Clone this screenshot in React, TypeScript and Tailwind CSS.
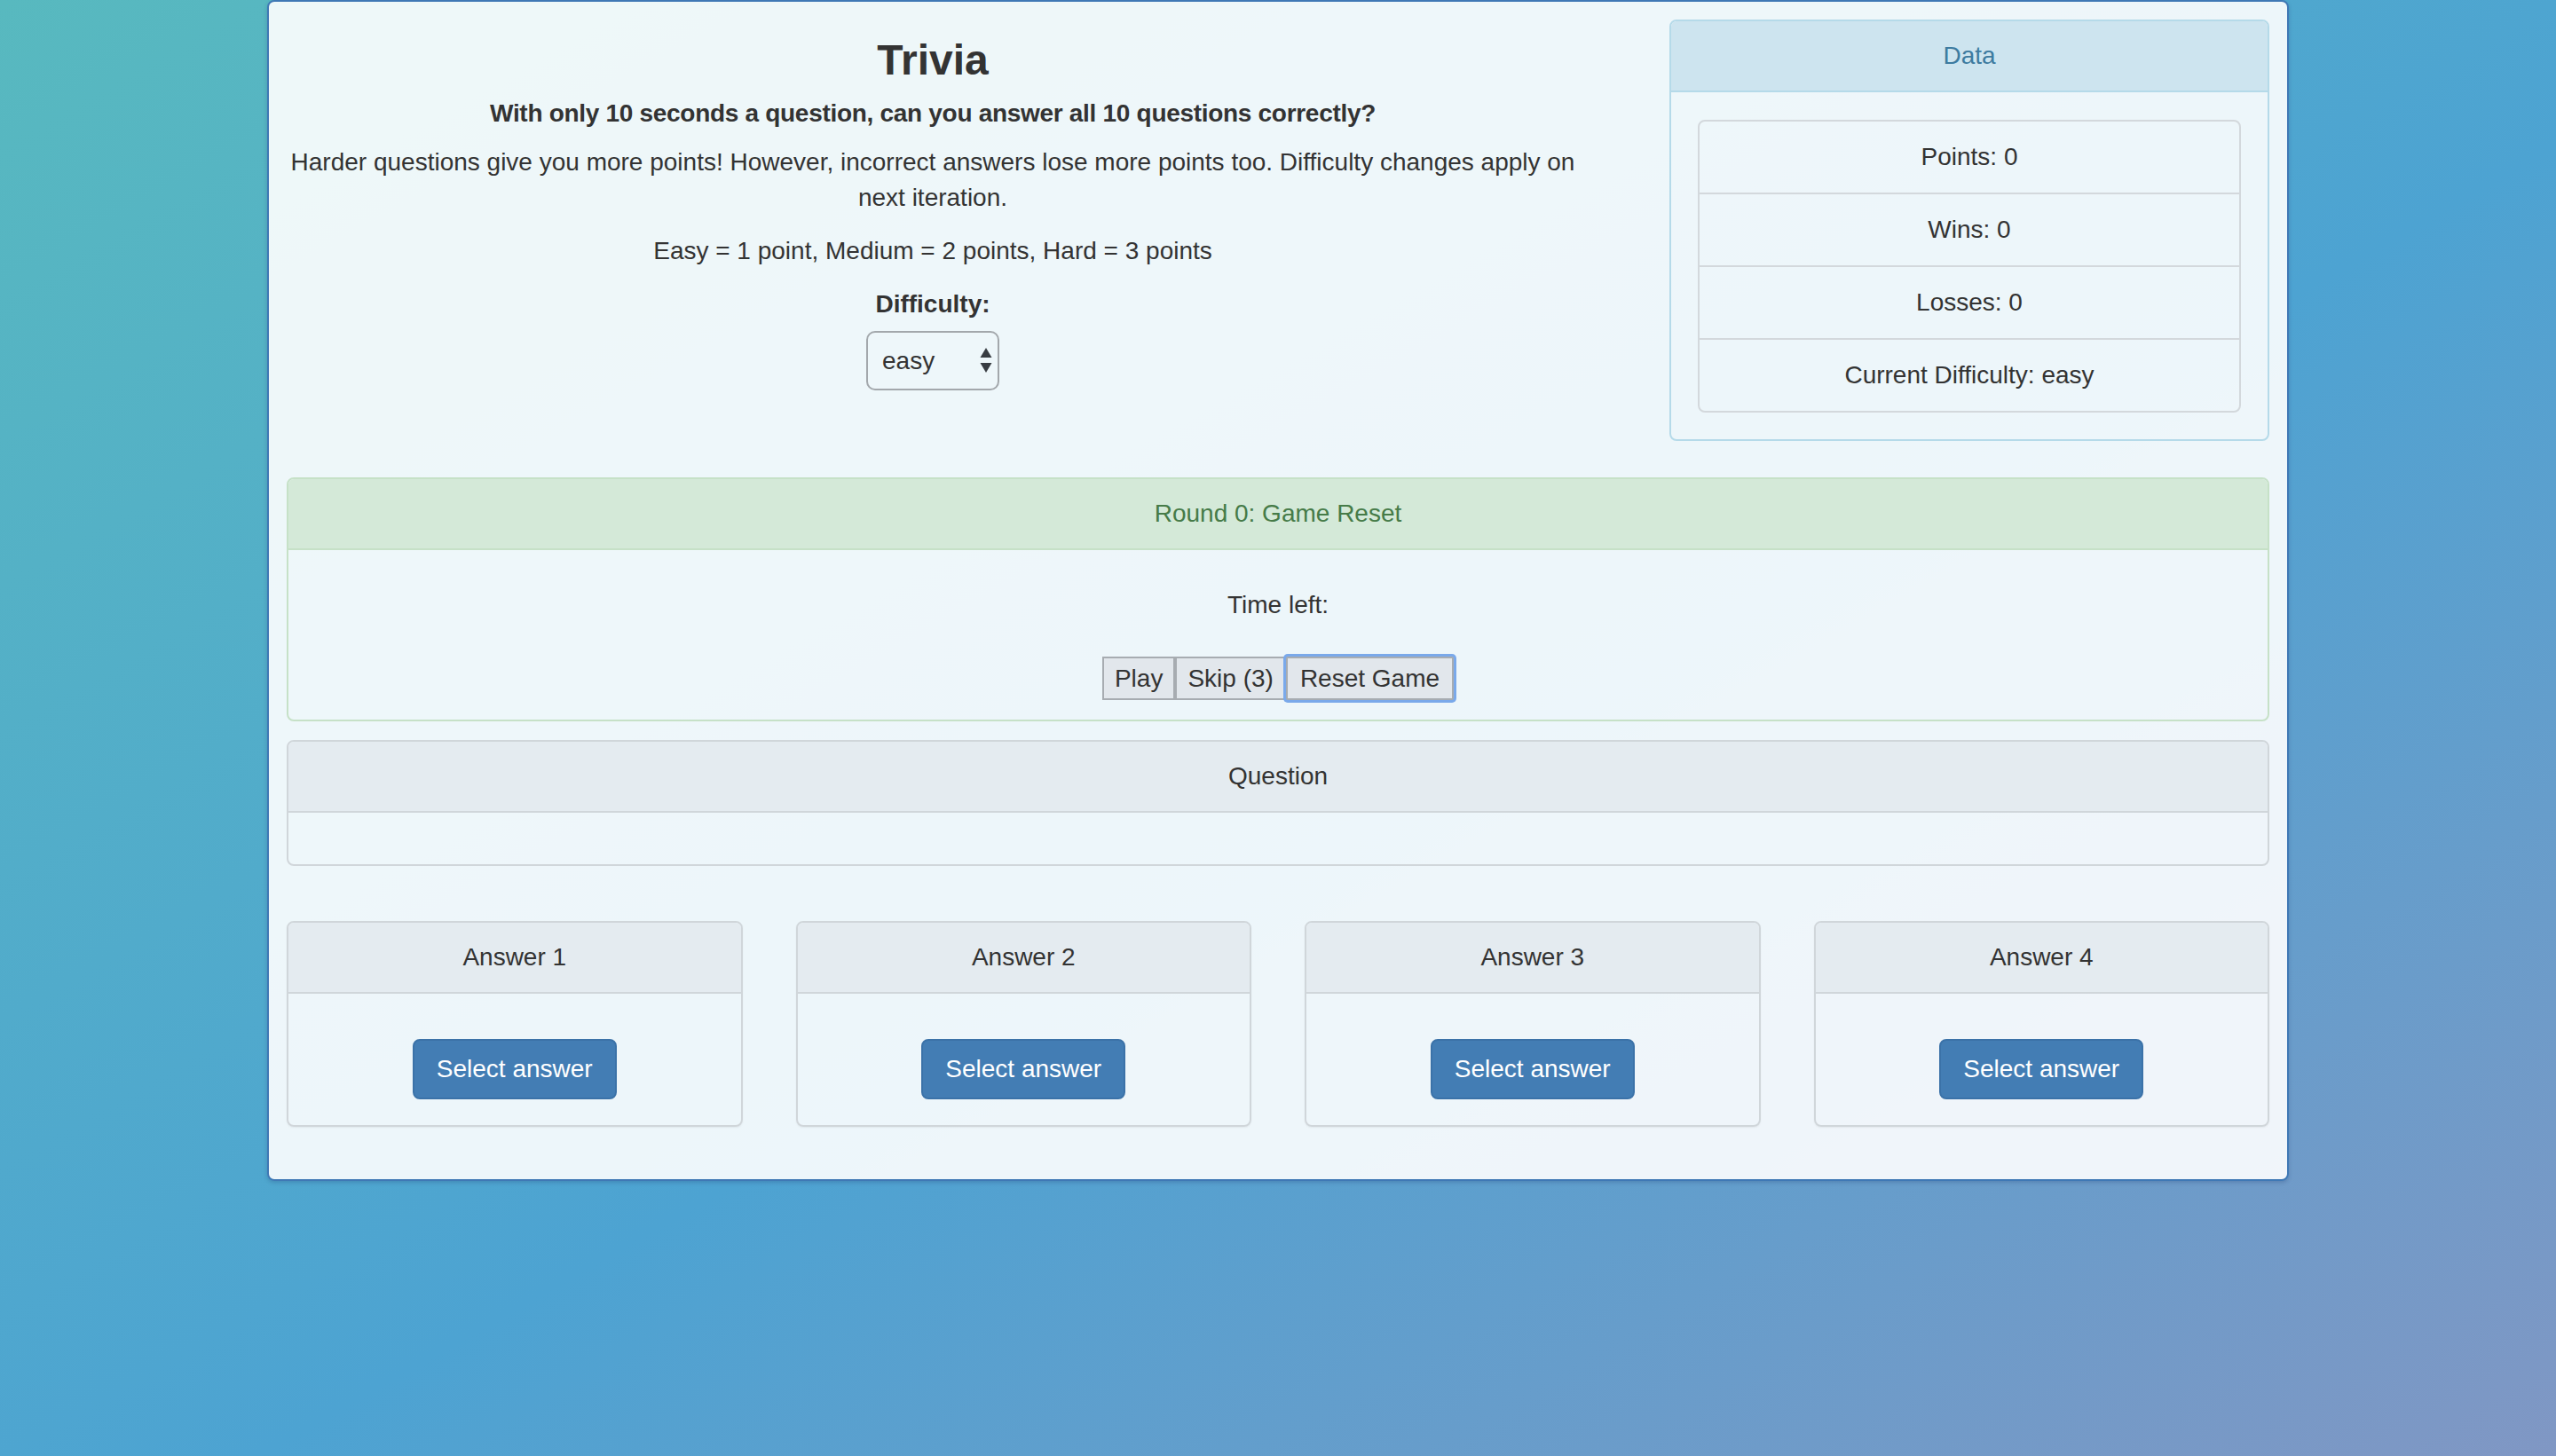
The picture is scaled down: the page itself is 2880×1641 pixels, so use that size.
import { useState } from "react";

const STATS = ["Points: 0", "Wins: 0", "Losses: 0", "Current Difficulty: easy"];
const ANSWERS = ["Answer 1", "Answer 2", "Answer 3", "Answer 4"];

const SelectArrows = () => (
  <svg width="14" height="28" viewBox="0 0 14 28" className="pointer-events-none absolute right-[8px] top-[19px]">
    <path d="M7 0 L13.5 11 L0.5 11 Z" fill="#383d42" />
    <path d="M0.5 17 L13.5 17 L7 28 Z" fill="#383d42" />
  </svg>
);

export default function App() {
  const [difficulty, setDifficulty] = useState("easy");

  return (
    <div className="min-h-screen w-full bg-[linear-gradient(to_bottom_right,#58b9bf_0%,#4da3d2_55%,#8097c4_100%)] font-['Liberation_Sans',Arial,sans-serif] text-[28px] leading-[40px] text-[#333]">
      <div className="mx-auto w-[2278px] rounded-[8px] border-2 border-[#3f78b5] bg-white/90 px-[20px] pt-[20px] pb-[20px] shadow-[0_2px_4px_rgba(30,60,110,0.25)]">
        {/* top row: intro + data */}
        <div className="flex items-start">
          <div className="w-[1456px] text-center">
            <h3 className="mt-[19px] text-[48px] leading-[53px] font-bold">Trivia</h3>
            <p className="mt-[14px] font-bold tracking-[-0.3px]">With only 10 seconds a question, can you answer all 10 questions correctly?</p>
            <p className="mt-[15px]">
              Harder questions give you more points! However, incorrect answers lose more points too. Difficulty changes apply on next iteration.
            </p>
            <p className="mt-[20px]">Easy = 1 point, Medium = 2 points, Hard = 3 points</p>
            <label className="mt-[20px] block font-bold">Difficulty:</label>
            <div className="relative mx-auto mt-[10px] h-[67px] w-[150px]">
              <select
                value={difficulty}
                onChange={(e) => setDifficulty(e.target.value)}
                className="h-full w-full appearance-none rounded-[10px] border-2 border-[#a3a8ac] bg-transparent pl-[16px] text-[28px] text-[#333] outline-none"
              >
                <option value="easy">easy</option>
                <option value="medium">medium</option>
                <option value="hard">hard</option>
              </select>
              <SelectArrows />
            </div>
          </div>

          <div className="mb-[41px] ml-auto w-[676px] overflow-hidden rounded-[8px] border-2 border-[#b5dae9] text-center">
            <div className="border-b-2 border-[#b5dae9] bg-[#cde4ef] py-[19px] text-[#3d7ba0]">Data</div>
            <div className="px-[30px] pt-[31px] pb-[30px]">
              <div className="overflow-hidden rounded-[8px] border-2 border-[#d3d8dc]">
                {STATS.map((s, i) => (
                  <div key={s} className={`py-[20px] ${i > 0 ? "border-t-2 border-[#d3d8dc]" : ""}`}>
                    {s}
                  </div>
                ))}
              </div>
            </div>
          </div>
        </div>

        {/* round */}
        <div className="overflow-hidden rounded-[8px] border-2 border-[#c6e1c7] text-center">
          <div className="border-b-2 border-[#c6e1c7] bg-[#d4e9d8] py-[19px] text-[#467b48]">Round 0: Game Reset</div>
          <div className="pt-[42px] pb-[22px]">
            <p>Time left:</p>
            <div className="mt-[38px] inline-flex">
              <button className="h-[49px] border-2 border-[#a7acb1] bg-[#e2e7ec] px-[12px] text-[28px] leading-[40px] text-[#333]">Play</button>
              <button className="h-[49px] border-2 border-[#a7acb1] bg-[#e2e7ec] px-[12px] text-[28px] leading-[40px] text-[#333]">Skip (3)</button>
              <button className="relative h-[49px] rounded-[2px] border-2 border-[#a7acb1] bg-[#e2e7ec] px-[14px] text-[28px] leading-[40px] text-[#333] shadow-[0_0_0_3px_#7aa9ea]">
                Reset Game
              </button>
            </div>
          </div>
        </div>

        {/* question */}
        <div className="mt-[21px] overflow-hidden rounded-[8px] border-2 border-[#d0d6da] text-center">
          <div className="border-b-2 border-[#d0d6da] bg-[#e4ebf0] py-[19px]">Question</div>
          <div className="h-[58px]" />
        </div>

        {/* answers */}
        <div className="mt-[62px] mb-[39px] grid grid-cols-4 gap-x-[60px]">
          {ANSWERS.map((a) => (
            <div key={a} className="overflow-hidden rounded-[8px] border-2 border-[#d0d6da] text-center shadow-[0_1px_2px_rgba(0,0,0,0.06)]">
              <div className="border-b-2 border-[#d0d6da] bg-[#e4ebf0] py-[19px]">{a}</div>
              <div className="pt-[51px] pb-[29px]">
                <button className="rounded-[8px] border-2 border-[#3b72a8] bg-[#437db4] px-[25px] py-[12px] leading-[40px] text-white">
                  Select answer
                </button>
              </div>
            </div>
          ))}
        </div>
      </div>
    </div>
  );
}
